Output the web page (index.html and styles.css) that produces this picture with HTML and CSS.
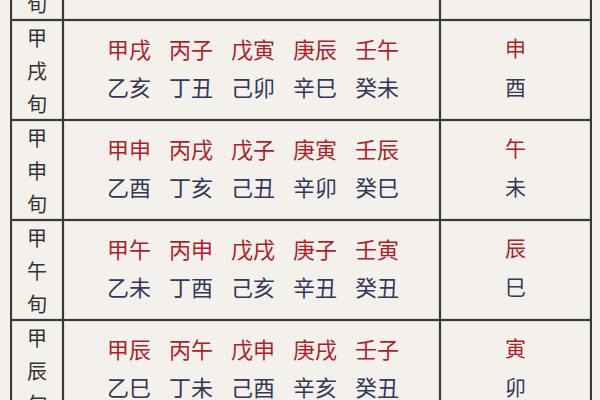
FILE: index.html
```html
<!DOCTYPE html>
<html lang="zh-CN">
<head>
<meta charset="utf-8">
<title>六甲旬空</title>
<link rel="stylesheet" href="styles.css">
</head>
<body>
<div class="table">
  <div class="cell xun"><span>甲</span><span>子</span><span>旬</span></div>
  <div class="cell pairs">
    <div class="line red"><span>甲子</span><span>丙寅</span><span>戊辰</span><span>庚午</span><span>壬申</span></div>
    <div class="line blue"><span>乙丑</span><span>丁卯</span><span>己巳</span><span>辛未</span><span>癸酉</span></div>
  </div>
  <div class="cell kong"><span class="red">戌</span><span class="blue">亥</span></div>

  <div class="cell xun"><span>甲</span><span>戌</span><span>旬</span></div>
  <div class="cell pairs">
    <div class="line red"><span>甲戌</span><span>丙子</span><span>戊寅</span><span>庚辰</span><span>壬午</span></div>
    <div class="line blue"><span>乙亥</span><span>丁丑</span><span>己卯</span><span>辛巳</span><span>癸未</span></div>
  </div>
  <div class="cell kong"><span class="red">申</span><span class="blue">酉</span></div>

  <div class="cell xun"><span>甲</span><span>申</span><span>旬</span></div>
  <div class="cell pairs">
    <div class="line red"><span>甲申</span><span>丙戌</span><span>戊子</span><span>庚寅</span><span>壬辰</span></div>
    <div class="line blue"><span>乙酉</span><span>丁亥</span><span>己丑</span><span>辛卯</span><span>癸巳</span></div>
  </div>
  <div class="cell kong"><span class="red">午</span><span class="blue">未</span></div>

  <div class="cell xun"><span>甲</span><span>午</span><span>旬</span></div>
  <div class="cell pairs">
    <div class="line red"><span>甲午</span><span>丙申</span><span>戊戌</span><span>庚子</span><span>壬寅</span></div>
    <div class="line blue"><span>乙未</span><span>丁酉</span><span>己亥</span><span>辛丑</span><span>癸丑</span></div>
  </div>
  <div class="cell kong"><span class="red">辰</span><span class="blue">巳</span></div>

  <div class="cell xun"><span>甲</span><span>辰</span><span>旬</span></div>
  <div class="cell pairs">
    <div class="line red"><span>甲辰</span><span>丙午</span><span>戊申</span><span>庚戌</span><span>壬子</span></div>
    <div class="line blue"><span>乙巳</span><span>丁未</span><span>己酉</span><span>辛亥</span><span>癸丑</span></div>
  </div>
  <div class="cell kong"><span class="red">寅</span><span class="blue">卯</span></div>
</div>
</body>
</html>
```
FILE: styles.css
```css
html, body {
  margin: 0;
  padding: 0;
  background: #f3f0eb;
  overflow: hidden;
  height: 400px;
}
body {
  font-family: "Noto Sans CJK SC", "Noto Sans CJK TC", sans-serif;
}
.table {
  display: grid;
  grid-template-columns: 52px 377px 151px;
  grid-auto-rows: 100px;
  margin: -81px 0 0 10px;
  width: 582px;
  border-left: 2px solid #3a3a3a;
  border-top: 2px solid #3a3a3a;
  background: #f4f1ec;
}
.cell {
  border-right: 2px solid #3a3a3a;
  border-bottom: 2px solid #3a3a3a;
  box-sizing: border-box;
  box-shadow: inset 0 0 0 1px #dcd8d2;
}
.xun {
  display: flex;
  flex-direction: column;
  align-items: center;
  justify-content: center;
  font-size: 20px;
  line-height: 33px;
  color: #333333;
}
.pairs {
  display: flex;
  flex-direction: column;
  justify-content: center;
  padding: 0 0 7px 43px;
}
.line {
  display: flex;
  gap: 18px;
  font-size: 22px;
  line-height: 38px;
}
.kong {
  display: flex;
  flex-direction: column;
  align-items: center;
  justify-content: center;
  font-size: 21px;
  line-height: 39px;
  padding-bottom: 7px;
}
.red { color: #ad2229; }
.blue { color: #33375a; }
```
